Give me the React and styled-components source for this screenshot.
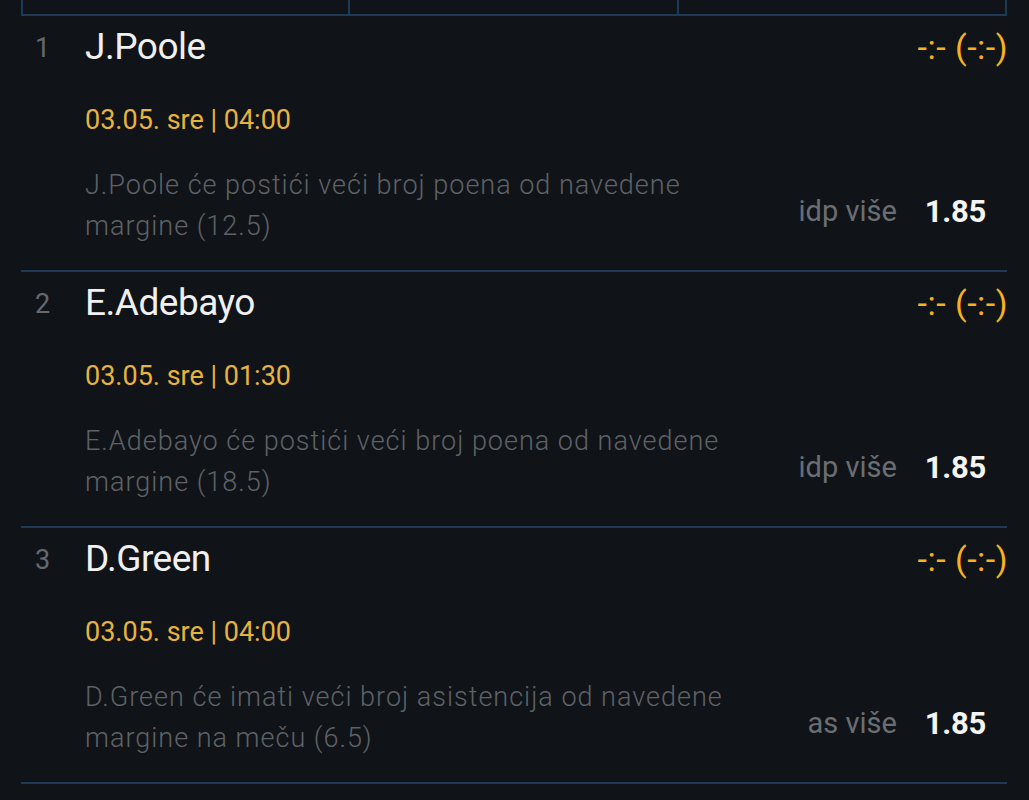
import React from "react";
import styled, { createGlobalStyle } from "styled-components";

const Global = createGlobalStyle`
  html, body { margin: 0; padding: 0; background: #101418; }
  body { font-family: Roboto, "Noto Sans", sans-serif; -webkit-font-smoothing: antialiased; }
`;

const Page = styled.div`
  width: 1029px;
  height: 800px;
  overflow: hidden;
  background: #101418;
  padding: 0 22px 0 21px;
  box-sizing: border-box;
`;

const TopTable = styled.div`
  display: grid;
  grid-template-columns: 327px 329px 1fr;
  height: 14px;
  border: 2px solid #1d3a57;
  border-top: none;
`;

const TopCell = styled.div`
  border-right: ${(p) => (p.$last ? "none" : "2px solid #1d3a57")};
`;

const Row = styled.div`
  display: grid;
  grid-template-columns: 64px 1fr;
  height: 254px;
  border-bottom: 2px solid #1d3a57;
  box-sizing: content-box;
`;

const Num = styled.div`
  font-size: 27px;
  color: #65696e;
  padding: 12px 0 0 14px;
  line-height: 40px;
`;

const Content = styled.div`
  display: flex;
  flex-direction: column;
`;

const Header = styled.div`
  display: flex;
  justify-content: space-between;
  align-items: center;
  padding-top: 7px;
`;

const Name = styled.div`
  font-size: 37px;
  color: #f0f0f0;
  line-height: 48px;
  letter-spacing: -0.5px;
`;

const Score = styled.div`
  font-size: 34px;
  color: #f5b21c;
  line-height: 48px;
  letter-spacing: 0.5px;
  margin-right: -1px;
`;

const DateLine = styled.div`
  font-size: 27px;
  color: #e6b33e;
  margin-top: 29px;
  line-height: 40px;
`;

const Body = styled.div`
  display: flex;
  align-items: center;
  margin-top: 25px;
`;

const Desc = styled.div`
  flex: 1;
  font-size: 27px;
  line-height: 41px;
  color: #5e6266;
  font-weight: 300;
  letter-spacing: 1px;
  max-width: 650px;
`;

const Market = styled.div`
  font-size: 29px;
  color: #6a6e73;
  margin-left: auto;
  margin-top: 10px;
  text-align: right;
`;

const Odds = styled.div`
  font-size: 31px;
  font-weight: 700;
  color: #f4f4f4;
  margin-top: 10px;
  margin-left: 28px;
  padding-right: 21px;
  letter-spacing: -0.3px;
`;

const rows = [
  { n: 1, name: "J.Poole", date: "03.05. sre | 04:00", desc: "J.Poole će postići veći broj poena od navedene margine (12.5)", market: "idp više" },
  { n: 2, name: "E.Adebayo", date: "03.05. sre | 01:30", desc: "E.Adebayo će postići veći broj poena od navedene margine (18.5)", market: "idp više" },
  { n: 3, name: "D.Green", date: "03.05. sre | 04:00", desc: "D.Green će imati veći broj asistencija od navedene margine na meču (6.5)", market: "as više" },
];

export default function App() {
  return (
    <>
      <Global />
      <Page>
        <TopTable>
          <TopCell />
          <TopCell />
          <TopCell $last />
        </TopTable>
        {rows.map((r) => (
          <Row key={r.n}>
            <Num>{r.n}</Num>
            <Content>
              <Header>
                <Name>{r.name}</Name>
                <Score>-:- (-:-)</Score>
              </Header>
              <DateLine>{r.date}</DateLine>
              <Body>
                <Desc>{r.desc}</Desc>
                <Market>{r.market}</Market>
                <Odds>1.85</Odds>
              </Body>
            </Content>
          </Row>
        ))}
      </Page>
    </>
  );
}
